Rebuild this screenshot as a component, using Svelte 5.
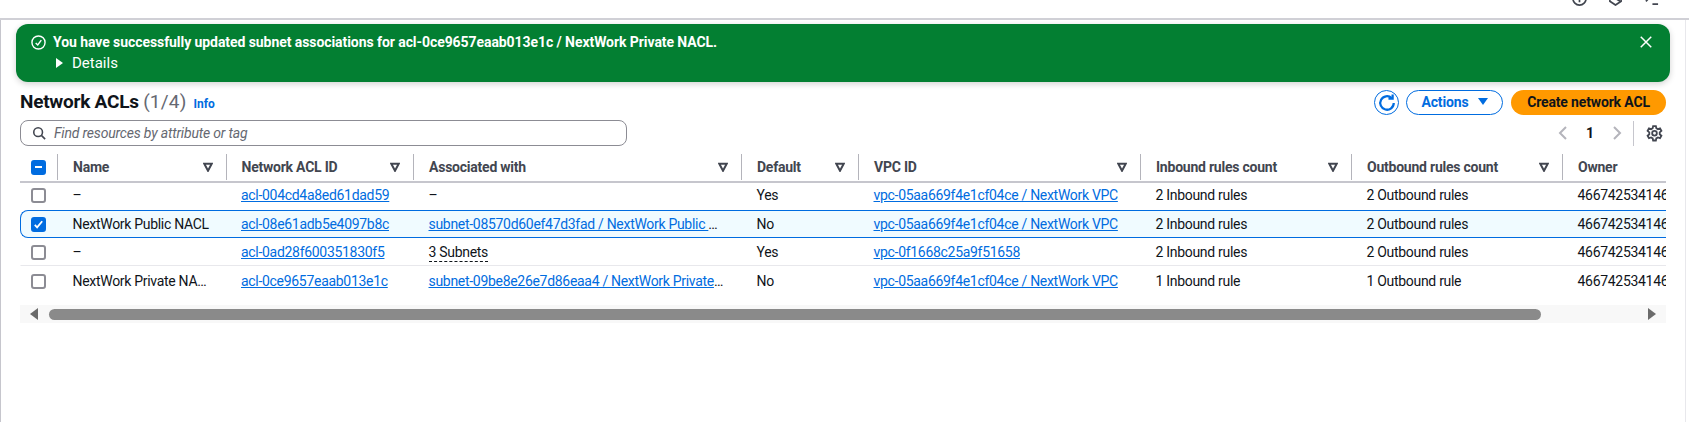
<script>
  const columns = [
    { label: 'Name' },
    { label: 'Network ACL ID' },
    { label: 'Associated with' },
    { label: 'Default' },
    { label: 'VPC ID' },
    { label: 'Inbound rules count' },
    { label: 'Outbound rules count' },
    { label: 'Owner' },
  ];

  const vpcMain = 'vpc-05aa669f4e1cf04ce / NextWork VPC';

  const rows = [
    { name: '–', acl: 'acl-004cd4a8ed61dad59', assoc: '–', assocType: 'text', def: 'Yes', vpc: vpcMain, inbound: '2 Inbound rules', outbound: '2 Outbound rules', rowClass: 'first' },
    { name: 'NextWork Public NACL', acl: 'acl-08e61adb5e4097b8c', assoc: 'subnet-08570d60ef47d3fad / NextWork Public NACL subnet', assocType: 'link', def: 'No', vpc: vpcMain, inbound: '2 Inbound rules', outbound: '2 Outbound rules', rowClass: 'selected' },
    { name: '–', acl: 'acl-0ad28f600351830f5', assoc: '3 Subnets', assocType: 'dashed', def: 'Yes', vpc: 'vpc-0f1668c25a9f51658', inbound: '2 Inbound rules', outbound: '2 Outbound rules', rowClass: 'ruled' },
    { name: 'NextWork Private NACL', acl: 'acl-0ce9657eaab013e1c', assoc: 'subnet-09be8e26e7d86eaa4 / NextWork Private NACL subnet', assocType: 'link', def: 'No', vpc: vpcMain, inbound: '1 Inbound rule', outbound: '1 Outbound rule', rowClass: 'last' },
  ];
</script>

<div class="page">
  <div class="topbar">
    <svg class="top-icon" viewBox="0 0 16 16"><circle cx="8" cy="8" r="7" /><path d="M8 7v5M8 4v1.500" /></svg>
    <svg class="top-icon" viewBox="0 0 16 16"><path d="M8 1l6 3v7l-6 4-6-4V4z" /><path d="M8 8l5 3" /></svg>
    <svg class="top-icon" viewBox="0 0 16 16"><path d="M2 1l5 5-5 5M9 14h6" /></svg>
  </div>

  <main class="content">
    <div class="flash">
      <svg class="flash-check" viewBox="0 0 16 16"><circle cx="8" cy="8" r="7" /><path d="M5 8.500l2.200 2.200L11 5.500" /></svg>
      <div class="flash-body">
        <div class="flash-msg">You have successfully updated subnet associations for acl-0ce9657eaab013e1c / NextWork Private NACL.</div>
        <div class="flash-details"><span class="tri"></span>Details</div>
      </div>
      <svg class="flash-close" viewBox="0 0 16 16"><path d="M2 2l12 12M14 2L2 14" /></svg>
    </div>

    <div class="head">
      <div class="title">
        <h1>Network ACLs <span class="count">(1/4)</span></h1>
        <a class="info" href="#info">Info</a>
      </div>
      <div class="actions">
        <button class="refresh" aria-label="Refresh">
          <svg viewBox="0 0 16 16"><path d="M14 8a6 6 0 1 1-1.900-4.400" /><path d="M13 .5v3.700H9.300" /></svg>
        </button>
        <button class="btn-normal">Actions <span class="caret"></span></button>
        <button class="btn-primary">Create network ACL</button>
      </div>
    </div>

    <div class="tools">
      <div class="search">
        <svg viewBox="0 0 16 16"><circle cx="7" cy="7" r="5" /><path d="M10.700 10.700L15 15" /></svg>
        <span>Find resources by attribute or tag</span>
      </div>
      <div class="pager">
        <svg class="chev" viewBox="0 0 16 16"><path d="M11 2L5 8l6 6" /></svg>
        <span class="page-no">1</span>
        <svg class="chev" viewBox="0 0 16 16"><path d="M5 2l6 6-6 6" /></svg>
        <span class="pager-sep"></span>
        <svg class="gear" viewBox="0 0 16 16">
          <path d="M6.700 1h2.600l.4 2 1.500.9 2-.7 1.300 2.300-1.600 1.400v1.800l1.600 1.400-1.300 2.300-2-.7-1.500.9-.4 2H6.700l-.4-2-1.500-.9-2 .7L1.500 10.100l1.600-1.400V6.900L1.500 5.500l1.300-2.300 2 .7 1.500-.9z" />
          <circle cx="8" cy="7.800" r="2.200" />
        </svg>
      </div>
    </div>

    <div class="table-clip">
      <div class="row header">
        <div class="cell check"><span class="box indeterminate"><span class="dash"></span></span></div>
        {#each columns as col, i}
          <div class="cell th">
            <span>{col.label}</span>
            {#if i < columns.length - 1}
              <svg class="sort" viewBox="0 0 12 12"><path d="M1.500 2h9L6 10.500z" /></svg>
            {/if}
          </div>
        {/each}
      </div>

      {#each rows as row}
        <div class="row body {row.rowClass}">
          <div class="cell check">
            {#if row.rowClass === 'selected'}
              <span class="box checked">
                <svg viewBox="0 0 14 14"><path d="M3 7.500l2.500 2.500L11 3.500" /></svg>
              </span>
            {:else}
              <span class="box"></span>
            {/if}
          </div>
          <div class="td">{row.name}</div>
          <div class="td"><a href="#acl">{row.acl}</a></div>
          <div class="td">
            {#if row.assocType === 'link'}
              <a href="#subnet">{row.assoc}</a>
            {:else if row.assocType === 'dashed'}
              <span class="dashed">{row.assoc}</span>
            {:else}
              {row.assoc}
            {/if}
          </div>
          <div class="td">{row.def}</div>
          <div class="td"><a href="#vpc">{row.vpc}</a></div>
          <div class="td">{row.inbound}</div>
          <div class="td">{row.outbound}</div>
          <div class="td">466742534146</div>
        </div>
      {/each}
    </div>

    <div class="scrollbar">
      <span class="arrow left"></span>
      <div class="track"><div class="thumb"></div></div>
      <span class="arrow right"></span>
    </div>
  </main>
</div>

<style>
  :global(body) {
    margin: 0;
    background: #fff;
    font-family: Roboto, "Noto Sans", sans-serif;
    font-size: 14px;
    color: #0f141a;
  }

  .page {
    height: 422px;
    overflow: hidden;
  }

  .topbar {
    height: 20px;
    box-sizing: border-box;
    border-bottom: 2px solid #d0d0d6;
    display: flex;
    justify-content: flex-end;
    align-items: flex-end;
    gap: 21px;
    padding: 0 30px 12px 0;
    overflow: hidden;
  }

  .top-icon {
    width: 15px;
    height: 15px;
    flex: none;
    fill: none;
    stroke: #424650;
    stroke-width: 1.800;
  }

  .content {
    height: 402px;
    box-sizing: border-box;
    border-left: 1px solid #c6c6cd;
    border-right: 1px solid #e8e8ec;
    margin-right: 3px;
    padding: 4px 0 0 15px;
  }

  .flash {
    width: 1654px;
    height: 58px;
    box-sizing: border-box;
    background: #037f32;
    color: #fff;
    border-radius: 12px;
    box-shadow: 0 2px 6px rgba(0, 0, 0, 0.18);
    display: flex;
    padding: 8px 15px;
    gap: 7px;
  }

  .flash-check {
    width: 15px;
    height: 15px;
    margin-top: 3px;
    fill: none;
    stroke: #fff;
    stroke-width: 1.500;
    flex: none;
  }

  .flash-body {
    flex: 1;
  }

  .flash-msg {
    line-height: 20px;
    font-weight: 700;
    letter-spacing: -0.07px;
  }

  .flash-details {
    line-height: 22px;
    font-size: 15px;
    display: flex;
    align-items: center;
    padding-left: 3px;
    gap: 9px;
  }

  .tri {
    width: 0;
    height: 0;
    border-left: 7px solid #fff;
    border-top: 5px solid transparent;
    border-bottom: 5px solid transparent;
  }

  .flash-close {
    width: 14px;
    height: 14px;
    margin: 3px 2px 0 0;
    fill: none;
    stroke: #fff;
    stroke-width: 1.700;
    flex: none;
  }

  .head {
    display: flex;
    justify-content: space-between;
    align-items: center;
    width: 1646px;
    margin: 8px 0 0 4px;
    height: 25px;
  }

  .title {
    display: flex;
    align-items: baseline;
    gap: 7px;
    margin-top: -2px;
  }

  h1 {
    margin: 0;
    font-size: 19px;
    font-weight: 700;
    letter-spacing: -0.25px;
  }

  .count {
    font-weight: 400;
    color: #656871;
    letter-spacing: 0.2px;
  }

  .info {
    font-size: 12px;
    font-weight: 700;
    color: #006ce0;
    text-decoration: none;
  }

  .actions {
    display: flex;
    align-items: center;
    gap: 7px;
  }

  button {
    font-family: inherit;
    font-size: 14px;
    font-weight: 700;
    letter-spacing: -0.15px;
    height: 25px;
    border-radius: 13px;
    box-sizing: border-box;
    cursor: pointer;
    padding: 0 0 2px;
  }

  .refresh {
    width: 25px;
    padding: 0;
    background: #fff;
    border: 1px solid #006ce0;
    display: flex;
    align-items: center;
    justify-content: center;
  }

  .refresh svg {
    width: 18px;
    height: 18px;
    fill: none;
    stroke: #006ce0;
    stroke-width: 2;
  }

  .btn-normal {
    width: 97px;
    background: #fff;
    border: 1px solid #006ce0;
    color: #006ce0;
    display: flex;
    align-items: center;
    justify-content: center;
    gap: 9px;
  }

  .caret {
    width: 0;
    height: 0;
    border-top: 7px solid #006ce0;
    border-left: 5.500px solid transparent;
    border-right: 5.500px solid transparent;
  }

  .btn-primary {
    width: 155px;
    margin-left: 1px;
    background: #ff9900;
    border: none;
    color: #0f141a;
  }

  .tools {
    display: flex;
    justify-content: space-between;
    align-items: center;
    width: 1646px;
    margin: 5px 0 0 4px;
    height: 26px;
  }

  .search {
    width: 607px;
    height: 26px;
    box-sizing: border-box;
    border: 1px solid #8c8c94;
    border-radius: 8px;
    display: flex;
    align-items: center;
    gap: 8px;
    padding-left: 11px;
    color: #656871;
    font-style: italic;
    letter-spacing: -0.18px;
  }

  .search svg {
    width: 14px;
    height: 14px;
    fill: none;
    stroke: #424650;
    stroke-width: 1.800;
  }

  .pager {
    display: flex;
    align-items: center;
    height: 26px;
    padding-right: 3px;
  }

  .chev {
    width: 16px;
    height: 16px;
    fill: none;
    stroke: #b4b4bb;
    stroke-width: 2;
  }

  .page-no {
    width: 38px;
    text-align: center;
    font-weight: 700;
  }

  .pager-sep {
    width: 1px;
    height: 25px;
    background: #c6c6cd;
    margin: 0 12px 0 8px;
  }

  .gear {
    width: 17px;
    height: 17px;
    fill: none;
    stroke: #424650;
    stroke-width: 1.700;
  }

  .table-clip {
    width: 1646px;
    margin: 8px 0 0 4px;
    overflow: hidden;
  }

  .row {
    display: grid;
    grid-template-columns: 36px 168.500px 187.500px 328px 117px 282px 211px 211px 240px;
    width: 1782px;
    box-sizing: border-box;
  }

  .header {
    height: 29px;
    border-bottom: 2px solid #c6c6cd;
    padding: 0 0 1px 1px;
  }

  .cell {
    display: flex;
    align-items: center;
    min-width: 0;
    box-sizing: border-box;
  }

  .check {
    padding-left: 10px;
  }

  .th {
    font-weight: 700;
    color: #424650;
    letter-spacing: -0.23px;
    border-left: 1px solid #b4b4bb;
    padding: 0 13px 0 15px;
    justify-content: space-between;
    height: 26px;
    align-self: center;
  }

  .sort {
    width: 10px;
    height: 10px;
    flex: none;
    fill: none;
    stroke: #424650;
    stroke-width: 2.400;
  }

  .body {
    height: 28px;
    border: 1px solid transparent;
    border-right: none;
    align-items: center;
  }

  .first {
    height: 27px;
    padding-bottom: 3px;
  }

  .last {
    padding-top: 2px;
  }

  .ruled {
    border-bottom-color: #e8e8ec;
  }

  .td {
    padding: 0 15px 0 15.500px;
    white-space: nowrap;
    overflow: hidden;
    text-overflow: ellipsis;
    line-height: 20px;
    letter-spacing: -0.3px;
    min-width: 0;
  }

  .selected {
    background: #f0fbff;
    border-color: #006ce0;
    border-radius: 8px 0 0 8px;
  }

  a {
    color: #006ce0;
    text-decoration: underline;
  }

  .dashed {
    border-bottom: 1px dashed #0f141a;
    padding-bottom: 1px;
  }

  .box {
    width: 15px;
    height: 15px;
    box-sizing: border-box;
    border: 2px solid #8c8c94;
    border-radius: 3px;
    background: #fff;
    display: flex;
    align-items: center;
    justify-content: center;
  }

  .box.checked,
  .box.indeterminate {
    background: #006ce0;
    border-color: #006ce0;
  }

  .box svg {
    width: 13px;
    height: 13px;
    flex: none;
    fill: none;
    stroke: #fff;
    stroke-width: 2;
  }

  .dash {
    width: 7px;
    height: 2px;
    background: #fff;
  }

  .scrollbar {
    width: 1646px;
    height: 18px;
    margin: 11px 0 0 4px;
    background: #f8f8f8;
    display: flex;
    align-items: center;
  }

  .track {
    flex: 1;
    padding: 0 107px 0 11px;
  }

  .thumb {
    height: 11px;
    background: #8a8a8a;
    border-radius: 6px;
  }

  .arrow {
    width: 0;
    height: 0;
    border-top: 6px solid transparent;
    border-bottom: 6px solid transparent;
  }

  .arrow.left {
    margin-left: 10px;
    border-right: 8px solid #6b6b6b;
  }

  .arrow.right {
    margin-right: 10px;
    border-left: 8px solid #6b6b6b;
  }
</style>
